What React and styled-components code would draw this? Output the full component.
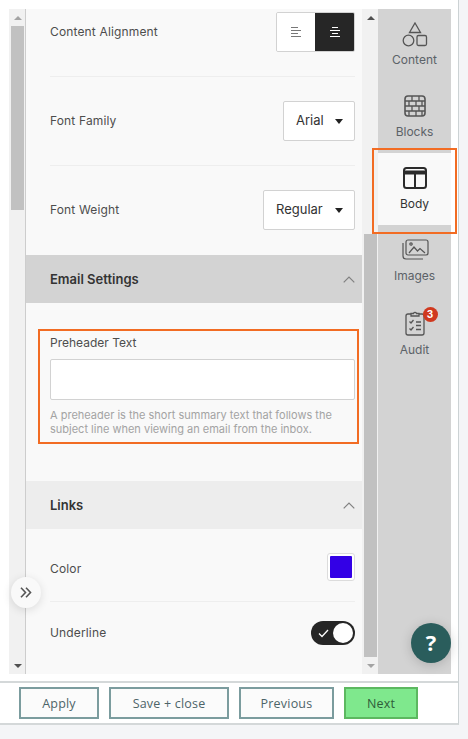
import styled, { createGlobalStyle } from 'styled-components';

const GlobalStyle = createGlobalStyle`
  html, body {
    margin: 0;
    padding: 0;
    background: #f4f5f7;
    font-family: Inter, "Liberation Sans", sans-serif;
  }
  * { box-sizing: border-box; }
`;

const ContentIcon = () => (
  <svg width="26" height="26" viewBox="0 0 26 26" fill="none" stroke="#555" strokeWidth="1.3">
    <path d="M13 1 18.5 10.5H7.5z" />
    <circle cx="6.5" cy="18.5" r="5.3" />
    <rect x="15" y="13.5" width="9.5" height="10" rx="1.5" />
  </svg>
);

const BlocksIcon = () => (
  <svg width="22" height="22" viewBox="0 0 22 22" fill="none" stroke="#555" strokeWidth="1.3">
    <rect x="1" y="1" width="20" height="20" rx="3" strokeWidth="1.6" />
    <path d="M1 6h20M1 11h20M1 16h20M8 1v5M15 1v5M5 6v5M12 6v5M18 6v5M8 11v5M15 11v5M5 16v5M12 16v5M18 16v5" />
  </svg>
);

const BodyIcon = () => (
  <svg width="24" height="22" viewBox="0 0 24 22" fill="none" stroke="#2b2b2b" strokeWidth="2">
    <rect x="1" y="1" width="22" height="20" rx="2.5" />
    <path d="M1 5.5h22" strokeWidth="4" />
    <path d="M12 6v15" />
  </svg>
);

const ImagesIcon = () => (
  <svg width="28" height="22" viewBox="0 0 28 22" fill="none" stroke="#555" strokeWidth="1.2">
    <rect x="5" y="1" width="22" height="15" rx="2" />
    <path d="M2 4v13a3 3 0 0 0 3 3h17" />
    <path d="M8 14l5-6 3.5 4 2.5-2.5 5 4.5" />
    <circle cx="10" cy="5" r="1.2" />
  </svg>
);

const AuditIcon = () => (
  <svg width="20" height="26" viewBox="0 0 20 26" fill="none" stroke="#555" strokeWidth="1.3">
    <path d="M6 4H3a2 2 0 0 0-2 2v17a2 2 0 0 0 2 2h14a2 2 0 0 0 2-2V6a2 2 0 0 0-2-2h-3" />
    <path d="M6 6V3.5h2.5a1.6 1.6 0 0 1 3 0H14V6z" />
    <path d="M4.5 11.5l1.5 1.5 2.5-3M4.5 18.5l1.5 1.5 2.5-3M11 12h5M11 15.5h5M11 19.5h5" />
  </svg>
);

const AlignLeftIcon = () => (
  <svg width="12" height="12" viewBox="0 0 12 12" stroke="#777" strokeWidth="1">
    <path d="M1 1.5h7M1 4.5h10M1 7.5h7M1 10.5h10" />
  </svg>
);

const AlignCenterIcon = () => (
  <svg width="12" height="12" viewBox="0 0 12 12" stroke="#fff" strokeWidth="1.2">
    <path d="M3 1.5h6M1 4.5h10M3 7.5h6M1 10.5h10" />
  </svg>
);

const Chevron = () => (
  <svg width="12" height="7" viewBox="0 0 12 7" fill="none" stroke="#808080" strokeWidth="1.2">
    <path d="M.7 6.3 6 1l5.3 5.3" />
  </svg>
);

const Page = styled.div`
  width: 468px;
  height: 739px;
  position: relative;
  overflow: hidden;
`;

const Shell = styled.div`
  width: 459px;
  height: 725px;
  padding: 9px 0 0 9px;
  background: #fff;
  border-right: 1px solid #ccd2d4;
  border-bottom: 2px solid #d4d8d9;
  display: flex;
  flex-direction: column;
`;

const Workspace = styled.div`
  height: 665px;
  display: flex;
`;

const Scrollbar = styled.div`
  width: ${(p) => p.$width}px;
  flex: none;
  background: #f1f1f1;
  border-right: ${(p) => (p.$divided ? '1px solid #cdcdcd' : 'none')};
  display: flex;
  flex-direction: column;
  padding-left: 2px;
`;

const ArrowSlot = styled.div`
  height: 17px;
  flex: none;
  display: flex;
  align-items: center;
  justify-content: center;
  width: 13px;
`;

const ArrowUp = styled.div`
  width: 0;
  height: 0;
  border-left: 4px solid transparent;
  border-right: 4px solid transparent;
  border-bottom: 4px solid ${(p) => p.$color};
`;

const ArrowDown = styled(ArrowUp)`
  border-bottom: none;
  border-top: 4px solid ${(p) => p.$color};
`;

const Thumb = styled.div`
  width: 13px;
  height: ${(p) => p.$height}px;
  margin-top: ${(p) => p.$offset}px;
  background: #c1c1c1;
  flex: none;
`;

const ScrollGap = styled.div`
  flex: 1;
`;

const Panel = styled.div`
  width: 336px;
  flex: none;
  background: #f9f9f9;
  overflow: hidden;
`;

const Row = styled.div`
  margin: 0 7px 0 24px;
  height: ${(p) => p.$height || 89}px;
  padding-top: ${(p) => p.$top || 24}px;
  display: flex;
  align-items: flex-start;
  justify-content: space-between;
  border-bottom: ${(p) => (p.$last ? 'none' : '1px solid #eeeeee')};
`;

const RowLabel = styled.div`
  font-size: 12px;
  letter-spacing: 0.15px;
  line-height: ${(p) => p.$line || 40}px;
  color: #4d4d4d;
`;

const AlignGroup = styled.div`
  display: flex;
  height: 40px;
  border-radius: 2px;
  overflow: hidden;
  border: 1px solid #d2d2d2;
`;

const AlignButton = styled.div`
  width: ${(p) => p.$width}px;
  margin: ${(p) => (p.$active ? '-1px -1px -1px 0' : '0')};
  height: ${(p) => (p.$active ? '40px' : '38px')};
  display: flex;
  align-items: center;
  justify-content: center;
  background: ${(p) => (p.$active ? '#262626' : '#fff')};
`;

const SelectBox = styled.div`
  width: ${(p) => p.$width}px;
  height: 40px;
  padding: 0 11px 2px 12px;
  background: #fff;
  border: 1px solid #d2d2d2;
  border-radius: 2px;
  display: flex;
  align-items: center;
  justify-content: space-between;
  font-size: 13px;
  color: #333;
`;

const Caret = styled.span`
  width: 0;
  height: 0;
  margin-top: 2px;
  border-left: 4.5px solid transparent;
  border-right: 4.5px solid transparent;
  border-top: 5px solid #222;
`;

const SectionHeader = styled.div`
  height: 48px;
  padding: 0 7px 0 24px;
  display: flex;
  align-items: center;
  justify-content: space-between;
  background: ${(p) => p.$background};
  font-size: 13px;
  font-weight: 600;
  color: #333;
`;

const HighlightField = styled.div`
  margin: 26px 3px 37px 12px;
  height: 115px;
  padding: 3px 2px 0 10px;
  border: 2px solid #f26c23;
`;

const FieldLabel = styled.div`
  font-size: 12px;
  line-height: 18px;
  color: #4d4d4d;
`;

const TextInput = styled.input`
  display: block;
  width: 305px;
  height: 41px;
  margin-top: 7px;
  background: #fff;
  border: 1px solid #d2d2d2;
  border-radius: 2px;
  outline: none;
`;

const FieldHelp = styled.div`
  width: 305px;
  margin-top: 8px;
  font-size: 11px;
  line-height: 14px;
  color: #a3a3a3;
`;

const Swatch = styled.div`
  width: 28px;
  height: 28px;
  padding: 2px;
  margin-top: 2px;
  background: #fff;
  border: 1px solid #dcdcdc;
  border-radius: 3px;
`;

const SwatchFill = styled.div`
  height: 100%;
  background: ${(p) => p.$color};
  border-radius: 1px;
`;

const Toggle = styled.div`
  width: 44px;
  height: 24px;
  padding: 2px;
  margin-top: 6px;
  background: #262626;
  border-radius: 12px;
  display: flex;
  align-items: center;
  justify-content: space-between;
`;

const ToggleKnob = styled.div`
  width: 20px;
  height: 20px;
  background: #fff;
  border-radius: 50%;
`;

const CheckMark = styled.svg`
  margin-left: 5px;
`;

const Sidebar = styled.div`
  width: 73px;
  flex: none;
  background: #d3d3d3;
`;

const SideItem = styled.div`
  height: 72px;
  padding-top: ${(p) => p.$top}px;
  display: flex;
  flex-direction: column;
  align-items: center;
  background: ${(p) => (p.$active ? '#f9f9f9' : 'transparent')};
  position: relative;
`;

const IconSlot = styled.div`
  height: ${(p) => p.$height}px;
  display: flex;
  align-items: center;
  justify-content: center;
  position: relative;
`;

const SideLabel = styled.div`
  margin-top: ${(p) => p.$gap}px;
  font-size: 12px;
  line-height: 16px;
  color: ${(p) => (p.$active ? '#333' : '#5c6268')};
`;

const BodyHighlight = styled.div`
  position: absolute;
  left: -6px;
  top: -5px;
  width: 85px;
  height: 86px;
  border: 2px solid #f26c23;
  pointer-events: none;
`;

const Badge = styled.div`
  position: absolute;
  top: -3px;
  right: -13px;
  width: 15px;
  height: 15px;
  border-radius: 50%;
  background: #d0391f;
  color: #fff;
  font-size: 10px;
  font-weight: 700;
  line-height: 15px;
  text-align: center;
`;

const Footer = styled.div`
  margin: 7px 0 0 -9px;
  height: 42px;
  padding: 4px 0 0 19px;
  border-top: 2px solid #d4d8d9;
  display: flex;
  gap: 10px;
`;

const FooterButton = styled.div`
  width: ${(p) => p.$width}px;
  height: 32px;
  display: flex;
  align-items: center;
  justify-content: center;
  background: ${(p) => (p.$primary ? '#7fe88d' : '#fbfbfb')};
  border: 2px solid ${(p) => (p.$primary ? '#5cb860' : '#7b9c9e')};
  font-family: "Open Sans", "Liberation Sans", sans-serif;
  font-size: 12.5px;
  letter-spacing: 0.2px;
  color: ${(p) => (p.$primary ? '#2f5d3a' : '#4d6468')};
`;

const CollapseButton = styled.div`
  position: absolute;
  left: 11px;
  top: 577px;
  width: 30px;
  height: 31px;
  border-radius: 50%;
  background: #f9f9f9;
  box-shadow: 0 2px 10px rgba(0, 0, 0, 0.12);
  display: flex;
  align-items: center;
  justify-content: center;
`;

const HelpButton = styled.div`
  position: absolute;
  left: 411px;
  top: 623px;
  width: 40px;
  height: 40px;
  padding-bottom: 2px;
  border-radius: 50%;
  background: #2a5d5c;
  box-shadow: 0 2px 12px rgba(0, 0, 0, 0.18);
  color: #fff;
  font-family: "Open Sans", "Liberation Sans", sans-serif;
  font-size: 22px;
  font-weight: 700;
  display: flex;
  align-items: center;
  justify-content: center;
`;

const App = () => {
  return (
    <Page>
      <GlobalStyle />
      <Shell>
        <Workspace>
          <Scrollbar $width={17} $divided>
            <ArrowSlot>
              <ArrowUp $color="#a3a3a3" />
            </ArrowSlot>
            <Thumb $height={184} $offset={0} />
            <ScrollGap />
            <ArrowSlot>
              <ArrowDown $color="#505050" />
            </ArrowSlot>
          </Scrollbar>
          <Panel>
            <Row $height={68} $top={3}>
              <RowLabel>Content Alignment</RowLabel>
              <AlignGroup>
                <AlignButton $width={38}>
                  <AlignLeftIcon />
                </AlignButton>
                <AlignButton $width={40} $active>
                  <AlignCenterIcon />
                </AlignButton>
              </AlignGroup>
            </Row>
            <Row>
              <RowLabel>Font Family</RowLabel>
              <SelectBox $width={72}>
                Arial
                <Caret />
              </SelectBox>
            </Row>
            <Row $last>
              <RowLabel>Font Weight</RowLabel>
              <SelectBox $width={92}>
                Regular
                <Caret />
              </SelectBox>
            </Row>
            <SectionHeader $background="#d3d3d3">
              Email Settings
              <Chevron />
            </SectionHeader>
            <HighlightField>
              <FieldLabel>Preheader Text</FieldLabel>
              <TextInput />
              <FieldHelp>
                A preheader is the short summary text that follows the subject line when viewing an email from the inbox.
              </FieldHelp>
            </HighlightField>
            <SectionHeader $background="#ededed">
              Links
              <Chevron />
            </SectionHeader>
            <Row $height={73} $top={22}>
              <RowLabel $line={36}>Color</RowLabel>
              <Swatch>
                <SwatchFill $color="#3300e6" />
              </Swatch>
            </Row>
            <Row $last $top={13}>
              <RowLabel $line={36}>Underline</RowLabel>
              <Toggle>
                <CheckMark width="11" height="9" viewBox="0 0 11 9" fill="none" stroke="#fff" strokeWidth="1.3">
                  <path d="M1 4.5 4 7.5 10 1" />
                </CheckMark>
                <ToggleKnob />
              </Toggle>
            </Row>
          </Panel>
          <Scrollbar $width={16}>
            <ArrowSlot>
              <ArrowUp $color="#505050" />
            </ArrowSlot>
            <Thumb $height={423} $offset={208} />
            <ScrollGap />
            <ArrowSlot>
              <ArrowDown $color="#a3a3a3" />
            </ArrowSlot>
          </Scrollbar>
          <Sidebar>
            <SideItem $top={13}>
              <IconSlot $height={26}>
                <ContentIcon />
              </IconSlot>
              <SideLabel $gap={4}>Content</SideLabel>
            </SideItem>
            <SideItem $top={14}>
              <IconSlot $height={22}>
                <BlocksIcon />
              </IconSlot>
              <SideLabel $gap={7}>Blocks</SideLabel>
            </SideItem>
            <SideItem $top={14} $active>
              <IconSlot $height={22}>
                <BodyIcon />
              </IconSlot>
              <SideLabel $gap={7} $active>
                Body
              </SideLabel>
              <BodyHighlight />
            </SideItem>
            <SideItem $top={14}>
              <IconSlot $height={22}>
                <ImagesIcon />
              </IconSlot>
              <SideLabel $gap={7}>Images</SideLabel>
            </SideItem>
            <SideItem $top={13}>
              <IconSlot $height={26}>
                <AuditIcon />
                <Badge>3</Badge>
              </IconSlot>
              <SideLabel $gap={6}>Audit</SideLabel>
            </SideItem>
          </Sidebar>
        </Workspace>
        <Footer>
          <FooterButton $width={80}>Apply</FooterButton>
          <FooterButton $width={120}>Save + close</FooterButton>
          <FooterButton $width={95}>Previous</FooterButton>
          <FooterButton $width={74} $primary>
            Next
          </FooterButton>
        </Footer>
      </Shell>
      <CollapseButton>
        <svg width="12" height="11" viewBox="0 0 12 11" fill="none" stroke="#555" strokeWidth="1.6">
          <path d="M1 .8 5.5 5.5 1 10.2M6 .8l4.5 4.7L6 10.2" />
        </svg>
      </CollapseButton>
      <HelpButton>?</HelpButton>
    </Page>
  );
};

export default App;
